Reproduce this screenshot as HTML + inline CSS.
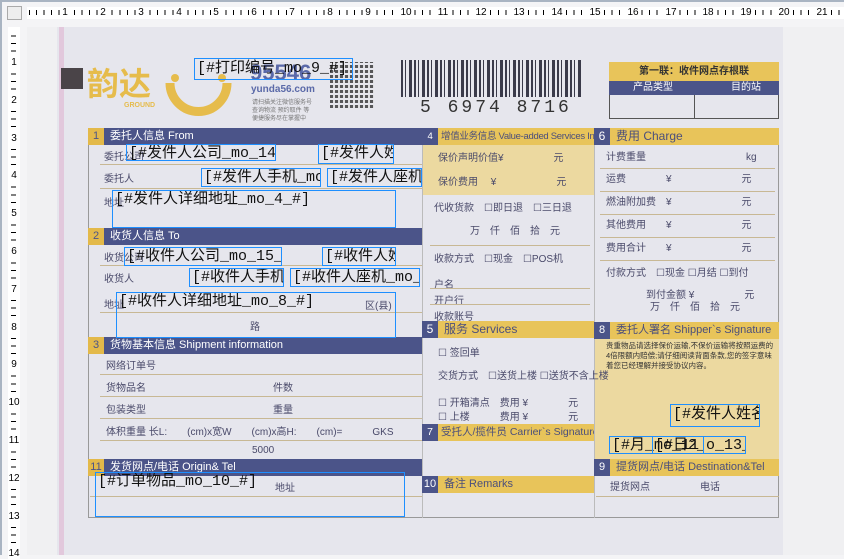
<!DOCTYPE html>
<html><head><meta charset="utf-8">
<style>
*{margin:0;padding:0;box-sizing:border-box}
body{width:844px;height:555px;overflow:hidden;background:#f4f4f6;font-family:"Liberation Sans","Noto Sans CJK SC",sans-serif;position:relative}
.a{position:absolute}
.paper{left:27px;top:27px;width:817px;height:528px;background:#e6e6ed}
.hd{position:absolute;height:17px;color:#fff;font-size:11px;line-height:17px;padding-left:22px;white-space:nowrap;overflow:hidden}
.hd b{position:absolute;left:0;top:0;width:16px;height:17px;text-align:center;font-weight:normal}
.nv{background:#4b5489}.nv b{background:#e3b94a;color:#4b5489}
.yl{background:#e8c45a;color:#4b4f7c}.yl b{background:#4b5489;color:#fff}
.lb{position:absolute;font-size:10px;color:#4a4a6a;white-space:nowrap}
.ln{position:absolute;height:1px;background:#c8b894}
.bx{position:absolute;border:1px solid #1e8fff;font-size:15px;line-height:17px;color:#111;white-space:nowrap;overflow:hidden;padding-left:2px;font-family:"Liberation Mono","Noto Sans CJK SC",monospace}
.tn{position:absolute;top:0;font-size:10px;line-height:12px;color:#000;background:#fff;padding:0 1px;transform:translateX(-50%);font-family:"Liberation Sans",sans-serif}
.ln2{position:absolute;left:0;width:12px;text-align:center;font-size:10px;line-height:10px;color:#000;background:#fff;transform:translateY(-50%)}
</style></head><body>
<div class="a" style="left:0;top:0;width:844px;height:2px;background:#a9b4c2"></div>
<div class="a" style="left:0;top:0;width:2px;height:555px;background:#a9b4c2"></div>
<div class="a" style="left:7px;top:6px;width:15px;height:14px;border:1px solid #aaa;background:#eee"></div>
<!-- top ruler -->
<div class="a" style="left:27px;top:7px;width:817px;height:12px;background:#fff">
 <div class="a" style="left:0;top:3px;width:817px;height:5px;background:repeating-linear-gradient(90deg,transparent 0 6px,#000 6px 7px,transparent 7px 7.57px);background-position:3px 0"></div>
 <span class="tn" style="left:38px">1</span><span class="tn" style="left:76px">2</span><span class="tn" style="left:114px">3</span><span class="tn" style="left:152px">4</span><span class="tn" style="left:189px">5</span><span class="tn" style="left:227px">6</span><span class="tn" style="left:265px">7</span><span class="tn" style="left:303px">8</span><span class="tn" style="left:341px">9</span><span class="tn" style="left:379px">10</span><span class="tn" style="left:416px">11</span><span class="tn" style="left:454px">12</span><span class="tn" style="left:492px">13</span><span class="tn" style="left:530px">14</span><span class="tn" style="left:568px">15</span><span class="tn" style="left:606px">16</span><span class="tn" style="left:644px">17</span><span class="tn" style="left:681px">18</span><span class="tn" style="left:719px">19</span><span class="tn" style="left:757px">20</span><span class="tn" style="left:795px">21</span>
</div>
<!-- left ruler -->
<div class="a" style="left:8px;top:27px;width:12px;height:528px;background:#fff">
 <div class="a" style="left:3px;top:0;width:5px;height:528px;background:repeating-linear-gradient(180deg,transparent 0 6.5px,#000 6.5px 7.5px,transparent 7.5px 7.56px);background-position:0 2px"></div>
 <span class="ln2" style="top:36px">1</span><span class="ln2" style="top:74px">2</span><span class="ln2" style="top:112px">3</span><span class="ln2" style="top:149px">4</span><span class="ln2" style="top:187px">5</span><span class="ln2" style="top:225px">6</span><span class="ln2" style="top:263px">7</span><span class="ln2" style="top:301px">8</span><span class="ln2" style="top:338px">9</span><span class="ln2" style="top:376px">10</span><span class="ln2" style="top:414px">11</span><span class="ln2" style="top:452px">12</span><span class="ln2" style="top:490px">13</span><span class="ln2" style="top:527px">14</span>
</div>
<!-- paper -->
<div class="a paper"></div>
<div class="a" style="left:27px;top:27px;width:30px;height:528px;background:#f0f0f2"></div>
<div class="a" style="left:783px;top:27px;width:61px;height:528px;background:#f0f0f2"></div>
<div class="a" style="left:59px;top:27px;width:5px;height:528px;background:#e2c8dc"></div>
<div class="a" style="left:61px;top:68px;width:22px;height:21px;background:#4a4448"></div>
<div class="a" style="left:87px;top:66px;font-size:32px;font-weight:bold;color:#e6bc4c;line-height:36px">韵达</div>
<div class="a" style="left:124px;top:102px;font-size:7px;font-weight:bold;color:#e6bc4c">GROUND</div>
<svg class="a" style="left:165px;top:68px" width="70" height="55"><path d="M5 15 A28 28 0 0 0 62 15" stroke="#e6bc4c" stroke-width="9" fill="none"/><circle cx="10" cy="10" r="4" fill="#e6bc4c"/><circle cx="57" cy="10" r="4" fill="#e6bc4c"/></svg>
<div class="a" style="left:250px;top:60px;font-size:22px;font-weight:bold;color:#5a69a8">95546</div>
<div class="a" style="left:251px;top:84px;font-size:10px;color:#5a69a8;font-weight:bold">yunda56.com</div>
<div class="a" style="left:252px;top:99px;font-size:6px;color:#777;line-height:8px">请扫描关注微信服务号<br>查询物流 预约取件 等<br>便捷服务尽在掌握中</div>
<div class="a" style="left:330px;top:62px;width:44px;height:46px;background:repeating-linear-gradient(90deg,#333 0 3px,#ddd 3px 5px),#333;opacity:.8"></div>
<div class="a" style="left:330px;top:62px;width:44px;height:46px;background:repeating-linear-gradient(0deg,transparent 0 3px,#e6e6ed 3px 5px)"></div>
<!-- barcode -->
<div class="a" style="left:401px;top:60px;width:182px;height:37px;background:repeating-linear-gradient(90deg,#3a3a4a 0 2px,#e6e6ed 2px 4px,#3a3a4a 4px 5px,#e6e6ed 5px 8px,#3a3a4a 8px 11px,#e6e6ed 11px 13px)"></div>
<div class="a" style="left:420px;top:98px;font-size:18px;color:#333;letter-spacing:3px;font-family:'Liberation Mono',monospace">5 6974 8716</div>
<!-- top right box -->
<div class="a" style="left:609px;top:62px;width:170px;height:57px;border:1px solid #555"></div>
<div class="a" style="left:609px;top:62px;width:170px;height:19px;background:#e8c45a;font-size:10px;text-align:center;line-height:19px;color:#333;font-weight:bold">第一联：收件网点存根联</div>
<div class="a" style="left:609px;top:81px;width:170px;height:14px;background:#4b5489;color:#fff;font-size:10px;line-height:14px"><span style="margin-left:24px">产品类型</span><span style="margin-left:58px">目的站</span></div>
<div class="a" style="left:694px;top:95px;width:1px;height:24px;background:#555"></div>
<!-- form outline -->
<div class="a" style="left:88px;top:128px;width:691px;height:390px;border:1px solid #999"></div>
<div class="a" style="left:422px;top:128px;width:1px;height:390px;background:#bbb"></div>
<div class="a" style="left:594px;top:128px;width:1px;height:390px;background:#bbb"></div>
<div class="a" style="left:423px;top:145px;width:171px;height:50px;background:#ecd9a0"></div>
<div class="a" style="left:595px;top:339px;width:184px;height:120px;background:#ecd9a0"></div>
<!-- headers -->
<div class="hd nv" style="left:88px;top:128px;width:334px"><b>1</b>委托人信息 From</div>
<div class="hd nv" style="left:88px;top:228px;width:334px"><b>2</b>收货人信息 To</div>
<div class="hd nv" style="left:88px;top:337px;width:334px"><b>3</b>货物基本信息 Shipment information</div>
<div class="hd nv" style="left:88px;top:459px;width:334px"><b>11</b>发货网点/电话 Origin&amp; Tel</div>
<div class="hd yl" style="left:422px;top:128px;width:172px;font-size:9.5px;padding-left:19px;letter-spacing:-0.3px"><b>4</b>增值业务信息 Value-added Services Info</div>
<div class="hd yl" style="left:594px;top:128px;width:185px;font-size:12px"><b>6</b>费用 Charge</div>
<div class="hd yl" style="left:422px;top:321px;width:172px;font-size:12px"><b>5</b>服务 Services</div>
<div class="hd yl" style="left:422px;top:424px;width:172px;font-size:10.5px;padding-left:19px"><b>7</b>受托人/揽件员 Carrier`s Signature</div>
<div class="hd yl" style="left:422px;top:476px;width:172px;font-size:11px"><b>10</b>备注 Remarks</div>
<div class="hd yl" style="left:594px;top:322px;width:185px;font-size:11px"><b>8</b>委托人署名 Shipper`s Signature</div>
<div class="hd yl" style="left:594px;top:459px;width:185px;font-size:11px"><b>9</b>提货网点/电话 Destination&amp;Tel</div>
<!-- left labels -->
<div class="lb" style="left:104px;top:148px">委托公司</div>
<div class="lb" style="left:104px;top:170px">委托人</div>
<div class="lb" style="left:104px;top:194px">地址</div>
<div class="lb" style="left:104px;top:249px">收货公司</div>
<div class="lb" style="left:104px;top:270px">收货人</div>
<div class="lb" style="left:104px;top:296px">地址</div>
<div class="lb" style="left:365px;top:297px">区(县)</div>
<div class="lb" style="left:250px;top:318px">路</div>
<div class="ln" style="left:100px;top:164px;width:322px"></div>
<div class="ln" style="left:100px;top:188px;width:322px"></div>
<div class="ln" style="left:100px;top:265px;width:322px"></div>
<div class="ln" style="left:100px;top:312px;width:322px"></div>
<div class="lb" style="left:106px;top:357px">网络订单号</div>
<div class="lb" style="left:106px;top:379px">货物品名</div><div class="lb" style="left:273px;top:379px">件数</div>
<div class="lb" style="left:106px;top:401px">包装类型</div><div class="lb" style="left:273px;top:401px">重量</div>
<div class="lb" style="left:106px;top:423px">体积重量 长L:　　(cm)x宽W　　(cm)x高H:　　(cm)=　　　GKS</div>
<div class="lb" style="left:252px;top:445px">5000</div>
<div class="ln" style="left:100px;top:374px;width:322px"></div>
<div class="ln" style="left:100px;top:396px;width:322px"></div>
<div class="ln" style="left:100px;top:418px;width:322px"></div>
<div class="ln" style="left:100px;top:440px;width:322px"></div>
<div class="lb" style="left:275px;top:479px">地址</div>
<div class="ln" style="left:90px;top:496px;width:332px"></div>
<!-- col 4 -->
<div class="lb" style="left:438px;top:149px">保价声明价值¥　　　　　元</div>
<div class="lb" style="left:438px;top:173px">保价费用　 ¥　　　　　　元</div>
<div class="lb" style="left:434px;top:199px">代收货款　☐即日退　☐三日退</div>
<div class="lb" style="left:470px;top:222px">万　仟　佰　拾　元</div>
<div class="lb" style="left:434px;top:250px">收款方式　☐现金　☐POS机</div>
<div class="lb" style="left:434px;top:276px">户名</div>
<div class="lb" style="left:434px;top:292px">开户行</div>
<div class="lb" style="left:434px;top:308px">收款账号</div>
<div class="ln" style="left:430px;top:245px;width:160px"></div>
<div class="ln" style="left:430px;top:288px;width:160px"></div>
<div class="ln" style="left:430px;top:304px;width:160px"></div>
<div class="lb" style="left:438px;top:344px">☐ 签回单</div>
<div class="lb" style="left:438px;top:367px">交货方式　☐送货上楼 ☐送货不含上楼</div>
<div class="lb" style="left:438px;top:394px">☐ 开箱清点　费用 ¥　　　　元</div>
<div class="lb" style="left:438px;top:408px">☐ 上楼　　　费用 ¥　　　　元</div>
<!-- col 6 -->
<div class="lb" style="left:606px;top:148px">计费重量　　　　　　　　　　kg</div>
<div class="lb" style="left:606px;top:170px">运费　　　　¥　　　　　　　元</div>
<div class="lb" style="left:606px;top:193px">燃油附加费　¥　　　　　　　元</div>
<div class="lb" style="left:606px;top:216px">其他费用　　¥　　　　　　　元</div>
<div class="lb" style="left:606px;top:239px">费用合计　　¥　　　　　　　元</div>
<div class="lb" style="left:606px;top:264px">付款方式　☐现金 ☐月结 ☐到付</div>
<div class="lb" style="left:646px;top:286px">到付金额 ¥　　　　　元</div>
<div class="lb" style="left:650px;top:298px">万　仟　佰　拾　元</div>
<div class="ln" style="left:600px;top:168px;width:175px"></div>
<div class="ln" style="left:600px;top:191px;width:175px"></div>
<div class="ln" style="left:600px;top:214px;width:175px"></div>
<div class="ln" style="left:600px;top:237px;width:175px"></div>
<div class="ln" style="left:600px;top:260px;width:175px"></div>
<div class="lb" style="left:606px;top:341px;font-size:7.5px;line-height:10px;color:#333">贵重物品请选择保价运输,不保价运输将按照运费的<br>4倍限额内赔偿;请仔细阅读背面条款,您的签字意味<br>着您已经理解并接受协议内容。</div>
<div class="lb" style="left:610px;top:478px">提货网点</div><div class="lb" style="left:700px;top:478px">电话</div>
<div class="ln" style="left:596px;top:496px;width:183px"></div>
<!-- blue boxes -->
<div class="bx" style="left:194px;top:58px;width:159px;height:22px;line-height:20px">[#打印编号_mo_9_#]</div>
<div class="bx" style="left:126px;top:144px;width:150px;height:17px">[#发件人公司_mo_14_#]</div>
<div class="bx" style="left:318px;top:144px;width:76px;height:20px">[#发件人姓名</div>
<div class="bx" style="left:201px;top:168px;width:120px;height:19px">[#发件人手机_mo</div>
<div class="bx" style="left:327px;top:168px;width:95px;height:19px">[#发件人座机</div>
<div class="bx" style="left:112px;top:190px;width:284px;height:38px">[#发件人详细地址_mo_4_#]</div>
<div class="bx" style="left:124px;top:247px;width:158px;height:19px">[#收件人公司_mo_15_#]</div>
<div class="bx" style="left:322px;top:247px;width:74px;height:19px">[#收件人姓名</div>
<div class="bx" style="left:189px;top:268px;width:95px;height:19px">[#收件人手机</div>
<div class="bx" style="left:290px;top:268px;width:130px;height:19px">[#收件人座机_mo_</div>
<div class="bx" style="left:116px;top:292px;width:280px;height:46px">[#收件人详细地址_mo_8_#]</div>
<div class="bx" style="left:95px;top:472px;width:310px;height:45px">[#订单物品_mo_10_#]</div>
<div class="bx" style="left:670px;top:404px;width:90px;height:23px;line-height:20px">[#发件人姓名</div>
<div class="bx" style="left:609px;top:436px;width:95px;height:18px">[#月_mo_11</div>
<div class="bx" style="left:652px;top:436px;width:52px;height:18px;background:transparent">[#日2_m</div>
<div class="bx" style="left:703px;top:436px;width:43px;height:18px">o_13_#</div>
</body></html>
